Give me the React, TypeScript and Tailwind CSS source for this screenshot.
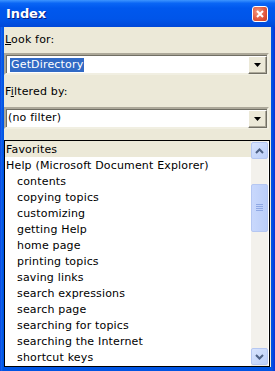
import type { ReactNode } from 'react';

const items: { label: string; level: number }[] = [
  { label: 'Favorites', level: 0 },
  { label: 'Help (Microsoft Document Explorer)', level: 0 },
  { label: 'contents', level: 1 },
  { label: 'copying topics', level: 1 },
  { label: 'customizing', level: 1 },
  { label: 'getting Help', level: 1 },
  { label: 'home page', level: 1 },
  { label: 'printing topics', level: 1 },
  { label: 'saving links', level: 1 },
  { label: 'search expressions', level: 1 },
  { label: 'search page', level: 1 },
  { label: 'searching for topics', level: 1 },
  { label: 'searching the Internet', level: 1 },
  { label: 'shortcut keys', level: 1 },
];

function DropButton() {
  return (
    <div className="w-[19px] h-[18px] bg-[#ECE9D8] border-t border-l border-t-white border-l-white border-b border-r border-b-[#716F64] border-r-[#716F64] shadow-[inset_-1px_-1px_0_#ACA899] flex items-center justify-center">
      <svg width="7" height="4" viewBox="0 0 7 4">
        <path d="M0 0h7L3.5 4z" fill="#000" />
      </svg>
    </div>
  );
}

function Combo({ children }: { children: ReactNode }) {
  return (
    <div className="h-[22px] mr-[2px] flex items-stretch bg-white border-t-2 border-l-2 border-t-[#ACA899] border-l-[#ACA899] border-b-2 border-r-2 border-b-[#F1EFE2] border-r-[#F1EFE2]">
      <div className="flex-1 flex items-center border-t border-l border-t-[#716F64] border-l-[#716F64]">
        {children}
      </div>
      <div className="flex items-center border-t border-t-[#716F64]">
        <DropButton />
      </div>
    </div>
  );
}

function ScrollButton({ up }: { up: boolean }) {
  return (
    <div className="w-[17px] h-[17px] rounded-[2px] border border-[#B5C7F2] bg-[linear-gradient(135deg,#D8E4FD,#BCCFF9)] flex items-center justify-center">
      <svg width="9" height="6" viewBox="0 0 9 6">
        <path
          d={up ? 'M1 5L4.5 1.5L8 5' : 'M1 1L4.5 4.5L8 1'}
          stroke="#4D6185"
          strokeWidth="2"
          fill="none"
        />
      </svg>
    </div>
  );
}

export default function App() {
  return (
    <div
      className="w-[275px] h-[371px] flex flex-col bg-[linear-gradient(90deg,#0831D9,#166AEE_1px,#0054E3_3px,#0054E3_calc(100%-3px),#0831D9)] text-[11px] tracking-[0.17px] text-black overflow-hidden"
      style={{ fontFamily: '"DejaVu Sans", Tahoma, sans-serif' }}
    >
      {/* Title bar */}
      <div className="h-[27px] flex items-center justify-between pl-[6px] pr-[7px] bg-[linear-gradient(180deg,#3D95FF_0%,#0A66F5_12%,#0058EE_30%,#0055E9_70%,#0048D8_100%)]">
        <span className="text-white font-bold text-[13px] tracking-[-0.1px] [text-shadow:1px_1px_0_#0A1E80]">Index</span>
        <div className="w-[16px] h-[16px] rounded-[3px] border border-white bg-[radial-gradient(circle_at_35%_35%,#F29A7E,#E0553B_60%,#C4401F)] flex items-center justify-center">
          <svg width="8" height="8" viewBox="0 0 8 8">
            <path d="M1 1L7 7M7 1L1 7" stroke="#fff" strokeWidth="2" />
          </svg>
        </div>
      </div>

      {/* Body */}
      <div className="flex-1 mx-[4px] mb-[4px] bg-[#ECE9D8] flex flex-col">
        <div className="h-[26px] pt-[5px] pl-[1px]">
          <span><span className="underline">L</span>ook for:</span>
        </div>
        <Combo>
          <span className="ml-[3px] px-[1px] h-[14px] leading-[14px] bg-[#316AC5] text-white">GetDirectory</span>
        </Combo>
        <div className="h-[32px] pt-[9px] pl-[1px]">
          <span>F<span className="underline">i</span>ltered by:</span>
        </div>
        <Combo>
          <span className="ml-[1px]">(no filter)</span>
        </Combo>
        <div className="h-[11px]" />

        {/* List */}
        <div className="flex-1 mr-[1px] flex border border-black bg-white overflow-hidden">
          <div className="flex-1 flex flex-col">
            {items.map((it, i) => (
              <div
                key={it.label}
                className={`h-[16px] leading-[17px] whitespace-nowrap ${it.level ? 'pl-[12px]' : 'pl-[1px]'} ${i === 0 ? 'bg-[#ECE9D8]' : ''}`}
              >
                {it.label}
              </div>
            ))}
          </div>
          <div className="w-[17px] mr-[1px] bg-[#F3F1EC] flex flex-col justify-between py-[1px]">
            <div className="flex flex-col">
              <ScrollButton up />
              <div className="h-[25px]" />
              <div className="h-[48px] rounded-[2px] border border-[#B5C7F2] bg-[linear-gradient(90deg,#C9D8FC,#BBCEF9)] flex items-center justify-center">
                <svg width="7" height="8" viewBox="0 0 7 8">
                  <path d="M0 0.5h7M0 2.5h7M0 4.5h7M0 6.5h7" stroke="#8FA8E4" strokeWidth="1" />
                </svg>
              </div>
            </div>
            <ScrollButton up={false} />
          </div>
        </div>
      </div>
    </div>
  );
}
